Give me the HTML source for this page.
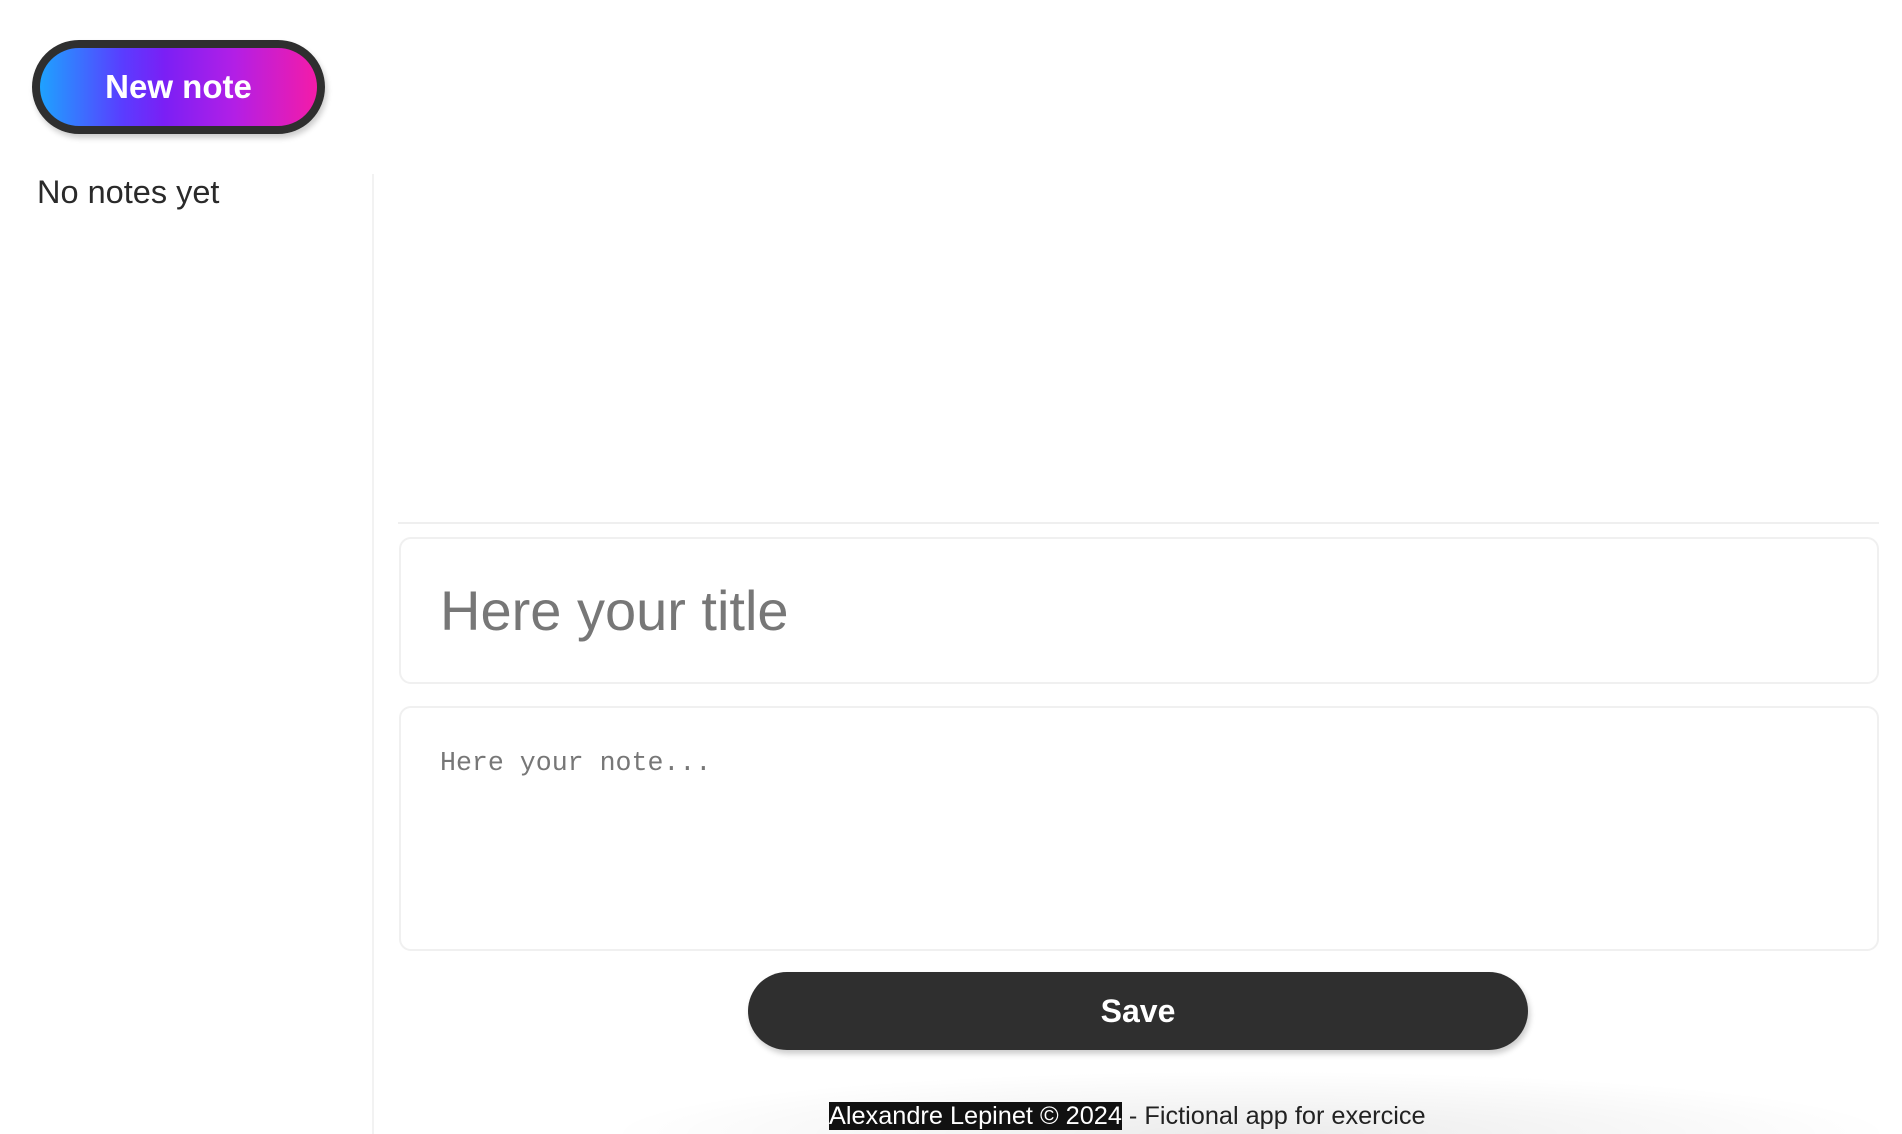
<!DOCTYPE html>
<html><head><meta charset="utf-8"><style>
*{box-sizing:border-box;margin:0;padding:0}
body{width:1902px;height:1134px;background:#fff;position:relative;overflow:hidden;font-family:"Liberation Sans",sans-serif;color:#2a2a2a}
.new{position:absolute;left:32px;top:40px;width:293px;height:94px;border:8px solid #2f2f2f;border-radius:47px;background:linear-gradient(90deg,#1ea2ff 0%,#5a3cff 30%,#7b1ff5 45%,#b21fe6 70%,#f41ba8 100%);color:#fff;font-weight:bold;font-size:33px;display:flex;align-items:center;justify-content:center;box-shadow:2px 4px 6px rgba(0,0,0,.2)}
.empty{position:absolute;left:37px;top:174px;font-size:32.5px}
.side{position:absolute;left:372px;top:174px;width:2px;height:960px;background:#f2f2f2}
.hr{position:absolute;left:398px;top:522px;width:1481px;height:2px;background:#efefef}
.title{position:absolute;left:399px;top:537px;width:1480px;height:147px;border:2px solid #f0f0f0;border-radius:12px;font-size:56px;color:#777;padding-left:39px;line-height:143px}
.note{position:absolute;left:399px;top:706px;width:1480px;height:245px;border:2px solid #f0f0f0;border-radius:12px;font-family:"Liberation Mono",monospace;font-size:26.6px;color:#777;padding:40px 0 0 39px}
.save{position:absolute;left:748px;top:972px;width:780px;height:78px;border-radius:39px;background:#2f2f2f;color:#fff;font-weight:bold;font-size:32px;display:flex;align-items:center;justify-content:center;box-shadow:2px 4px 6px rgba(0,0,0,.2)}
.foot{position:absolute;left:600px;top:1070px;width:1302px;height:64px;background:radial-gradient(ellipse at 50% 100%,rgba(0,0,0,.08),rgba(0,0,0,0) 70%)}
.ft{position:absolute;left:829px;top:1102px;font-size:25.3px;color:#222;line-height:28px}
.ft span{background:#111;color:#fff}
</style></head><body>
<div class="new">New note</div>
<div class="empty">No notes yet</div>
<div class="side"></div>
<div class="hr"></div>
<div class="title">Here your title</div>
<div class="note">Here your note...</div>
<div class="save">Save</div>
<div class="foot"></div>
<div class="ft"><span>Alexandre Lepinet © 2024</span> - Fictional app for exercice</div>
</body></html>
